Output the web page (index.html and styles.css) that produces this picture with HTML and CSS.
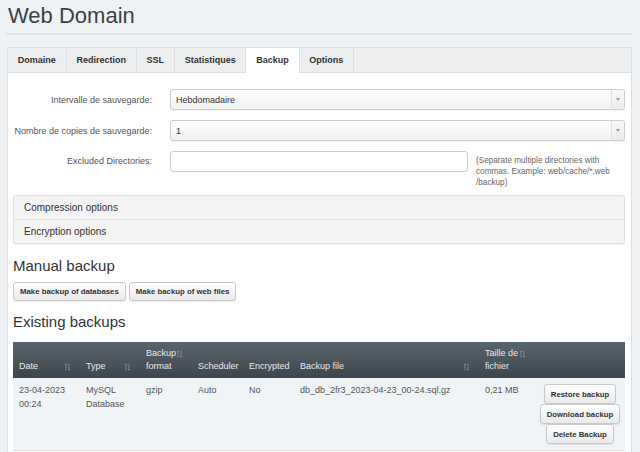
FILE: index.html
```html
<!DOCTYPE html>
<html lang="fr">
<head>
<meta charset="utf-8">
<title>Web Domain</title>
<link rel="stylesheet" href="styles.css">
</head>
<body>
<div class="page">
  <h1 class="title">Web Domain</h1>
  <hr class="rule">
  <div class="panel">
    <ul class="tabs">
      <li class="tab">Domaine</li>
      <li class="tab">Redirection</li>
      <li class="tab">SSL</li>
      <li class="tab">Statistiques</li>
      <li class="tab active">Backup</li>
      <li class="tab">Options</li>
    </ul>
    <div class="content">
      <div class="form">
        <div class="row">
          <label class="label">Intervalle de sauvegarde:</label>
          <div class="select"><span class="select-value">Hebdomadaire</span><span class="select-arrow"></span></div>
        </div>
        <div class="row">
          <label class="label">Nombre de copies de sauvegarde:</label>
          <div class="select"><span class="select-value">1</span><span class="select-arrow"></span></div>
        </div>
        <div class="row row-top">
          <label class="label label-tall">Excluded Directories:</label>
          <div class="field-help">
            <div class="input"></div>
            <p class="help">(Separate multiple directories with<br>commas. Example: web/cache/*,web<br>/backup)</p>
          </div>
        </div>
      </div>

      <div class="accordion">
        <div class="acc-item">Compression options</div>
        <div class="acc-item">Encryption options</div>
      </div>

      <h3 class="section-title">Manual backup</h3>
      <div class="actions">
        <button class="btn">Make backup of databases</button>
        <button class="btn">Make backup of web files</button>
      </div>

      <h3 class="section-title existing">Existing backups</h3>
      <table class="backups">
        <colgroup>
          <col class="c-date"><col class="c-type"><col class="c-format"><col class="c-sched"><col class="c-enc"><col class="c-file"><col class="c-size"><col class="c-act">
        </colgroup>
        <thead>
          <tr>
            <th><svg class="sort" viewBox="0 0 5 8"><path d="M1 7.5V0.8M0 2L1 0.8L2 2M4 0.5V7.2M3 6L4 7.2L5 6"/></svg>Date</th>
            <th><svg class="sort" viewBox="0 0 5 8"><path d="M1 7.5V0.8M0 2L1 0.8L2 2M4 0.5V7.2M3 6L4 7.2L5 6"/></svg>Type</th>
            <th><svg class="sort" viewBox="0 0 5 8"><path d="M1 7.5V0.8M0 2L1 0.8L2 2M4 0.5V7.2M3 6L4 7.2L5 6"/></svg>Backup<br>format</th>
            <th>Scheduler</th>
            <th>Encrypted</th>
            <th><svg class="sort" viewBox="0 0 5 8"><path d="M1 7.5V0.8M0 2L1 0.8L2 2M4 0.5V7.2M3 6L4 7.2L5 6"/></svg>Backup file</th>
            <th><svg class="sort" viewBox="0 0 5 8"><path d="M1 7.5V0.8M0 2L1 0.8L2 2M4 0.5V7.2M3 6L4 7.2L5 6"/></svg>Taille de<br>fichier</th>
            <th></th>
          </tr>
        </thead>
        <tbody>
          <tr>
            <td>23-04-2023<br>00:24</td>
            <td>MySQL<br>Database</td>
            <td>gzip</td>
            <td>Auto</td>
            <td>No</td>
            <td>db_db_2fr3_2023-04-23_00-24.sql.gz</td>
            <td>0,21 MB</td>
            <td class="act-cell">
              <div class="row-actions">
                <button class="btn btn-row">Restore backup</button>
                <button class="btn btn-row">Download backup</button>
                <button class="btn btn-row">Delete Backup</button>
              </div>
            </td>
          </tr>
        </tbody>
      </table>
    </div>
  </div>
</div>
</body>
</html>
```

FILE: styles.css
```css
* { box-sizing: border-box; }
html, body { margin: 0; }
body {
  background: #eef2f5;
  font-family: "Liberation Sans", Arial, sans-serif;
  color: #333;
}
.page { padding: 0 8px 0 7px; }
.title {
  margin: 0;
  padding: 3px 0 0 1px;
  font-size: 22px;
  line-height: 26px;
  font-weight: normal;
  color: #3d4145;
}
.rule {
  margin: 4px 0 0 -1px;
  border: 0;
  border-top: 2px solid #e0e4e8;
  height: 0;
}
.panel {
  margin-top: 12px;
  background: #fff;
  border: 1px solid #dcdfe3;
  border-bottom: 0;
  padding-bottom: 20px;
}
.tabs {
  display: flex;
  list-style: none;
  margin: 0;
  padding: 0;
  height: 25px;
  background: #ecedef;
  border-bottom: 1px solid #dcdfe3;
}
.tab {
  height: 24px;
  line-height: 24px;
  padding: 0 9.8px;
  font-size: 9px;
  font-weight: bold;
  color: #333;
  border-right: 1px solid #dcdfe3;
}
.tab.active {
  background: #fff;
  height: 25px;
}
.content { padding: 16px 6px 0 5px; }

.row {
  display: grid;
  grid-template-columns: 139px 1fr;
  column-gap: 18px;
  align-items: center;
  margin-bottom: 10px;
}
.row-top { align-items: start; margin-bottom: 7px; }
.label {
  text-align: right;
  font-size: 9px;
  color: #555;
}
.label-tall { line-height: 21px; }
.select {
  height: 21px;
  border: 1px solid #cdcdcd;
  border-radius: 3px;
  background: linear-gradient(#ffffff, #f0f0f0);
  display: flex;
  align-items: center;
  font-size: 9px;
  color: #333;
  box-shadow: 0 1px 1px rgba(0,0,0,0.05);
}
.select-value { flex: 1; padding-left: 5px; }
.select-arrow {
  width: 13px;
  align-self: stretch;
  border-left: 1px solid #e2e2e2;
  background: linear-gradient(#f8f8f8, #ececec);
  border-radius: 0 3px 3px 0;
  display: flex;
  align-items: center;
  justify-content: center;
}
.select-arrow::after {
  content: "";
  border-left: 2px solid transparent;
  border-right: 2px solid transparent;
  border-top: 3px solid #999;
}
.field-help { display: flex; align-items: flex-start; gap: 8px; }
.input {
  flex: none;
  width: 298px;
  height: 21px;
  border: 1px solid #cdcdcd;
  border-radius: 3px;
  background: #fff;
}
.help {
  margin: 4px 0 0;
  font-size: 8.2px;
  line-height: 11px;
  color: #666;
}

.accordion {
  border: 1px solid #e1e1e1;
  border-radius: 3px;
  background: #f4f4f4;
  box-shadow: 0 1px 1px rgba(0,0,0,0.07);
}
.acc-item {
  height: 23px;
  line-height: 23px;
  padding-left: 10px;
  font-size: 10px;
  color: #333;
}
.acc-item + .acc-item { border-top: 1px solid #e3e3e3; height: 24px; line-height: 24px; }

.section-title {
  margin: 13px 0 0;
  font-size: 15px;
  line-height: 18px;
  font-weight: normal;
  color: #333;
}
.section-title.existing { margin-top: 12px; }
.actions { display: flex; gap: 3px; margin-top: 7px; }
.btn {
  height: 19px;
  padding: 0 6px;
  font-family: "Liberation Sans", Arial, sans-serif;
  font-size: 7.8px;
  font-weight: bold;
  color: #333;
  border: 1px solid #c8c8c8;
  border-radius: 3px;
  background: linear-gradient(#ffffff, #e9e9e9);
  box-shadow: 0 1px 1px rgba(0,0,0,0.08);
  margin: 0;
}

.backups {
  margin-top: 11px;
  width: 100%;
  border-collapse: collapse;
  table-layout: fixed;
  font-size: 9px;
}
.c-date { width: 67px; }
.c-type { width: 60px; }
.c-format { width: 52px; }
.c-sched { width: 51px; }
.c-enc { width: 51px; }
.c-file { width: 185px; }
.c-size { width: 56px; }
.c-act { width: 90px; }
.backups thead tr { background: linear-gradient(#5a646c, #3d464d); }
.backups th {
  height: 36px;
  padding: 5px 10px 5px 6px;
  text-align: left;
  vertical-align: bottom;
  font-weight: normal;
  line-height: 13px;
  color: #e6e8ea;
  white-space: nowrap;
}
.sort {
  float: right;
  width: 5px;
  height: 8px;
  margin-top: 3px;
  fill: none;
  stroke: #8a9298;
  stroke-width: 0.8;
}
.backups td {
  padding: 5px 6px 6px;
  vertical-align: top;
  line-height: 14px;
  color: #555;
  background: #f1f4f7;
  border-bottom: 1px solid #dfe3e7;
}
.backups td.act-cell { padding: 6px 0; }
.row-actions {
  display: flex;
  flex-direction: column;
  align-items: center;
}
.btn-row { height: 20px; }
```
